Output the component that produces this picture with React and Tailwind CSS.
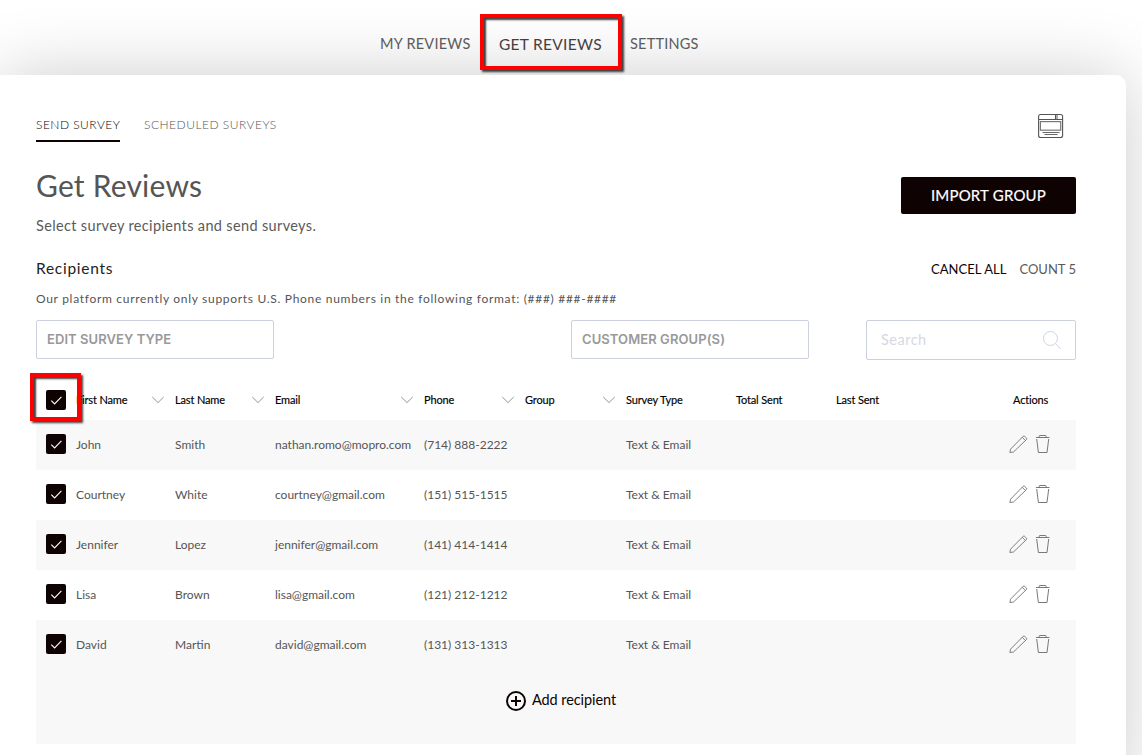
const recipients = [
  ["John", "Smith", "nathan.romo@mopro.com", "(714) 888-2222"],
  ["Courtney", "White", "courtney@gmail.com", "(151) 515-1515"],
  ["Jennifer", "Lopez", "jennifer@gmail.com", "(141) 414-1414"],
  ["Lisa", "Brown", "lisa@gmail.com", "(121) 212-1212"],
  ["David", "Martin", "david@gmail.com", "(131) 313-1313"],
];

const gridCols = "grid grid-cols-[40px_99px_100px_149px_101px_101px_110px_100px_177px_63px]";

function Checkbox() {
  return (
    <span className="ml-[10px] flex h-5 w-5 items-center justify-center rounded-[2px] bg-[#0e0202]">
      <svg width="20" height="20" viewBox="0 0 20 20" fill="none" stroke="white" strokeWidth="1.1">
        <path d="M5.3 10.6 8.6 14 15.4 6.8" />
      </svg>
    </span>
  );
}

function Chevron() {
  return (
    <svg width="14" height="8" viewBox="0 0 14 8" fill="none" stroke="#777" strokeWidth="0.8">
      <path d="M1.3 1 7 6.6 12.7 1" />
    </svg>
  );
}

function Header({ children, sort }) {
  return (
    <div className="flex items-center justify-between pr-[10px]">
      <span className="whitespace-nowrap">{children}</span>
      {sort && <Chevron />}
    </div>
  );
}

function Pencil() {
  return (
    <svg width="20" height="20" viewBox="0 0 20 20" fill="none" stroke="#6a6a6a" strokeWidth="0.85" strokeLinejoin="round">
      <path d="M1.9 18.5 2.5 15.2 15.2 2.3Q15.9 1.6 16.6 2.3L18.5 4.2Q19.1 4.9 18.4 5.6L5.5 18Z M14.2 3.3 17.4 6.5" />
    </svg>
  );
}

function Trash() {
  return (
    <svg width="16" height="20" viewBox="0 0 16 20" fill="none" stroke="#6a6a6a" strokeWidth="0.9">
      <path d="M0.9 3.5H14.5M4.2 3.5V2.3Q4.2 1.5 5 1.5H10.4Q11.2 1.5 11.2 2.3V3.5M1.7 5 3.4 18.5H12L13.7 5" />
    </svg>
  );
}

function WindowIcon() {
  return (
    <svg width="26" height="26" viewBox="0 0 26 26" fill="none" stroke="#555">
      <rect x="0.6" y="1.5" width="24" height="23" rx="2" strokeWidth="1.1" />
      <path d="M1 6.5H24.5M17.5 1.5V6.5M19 1.5V6.5" />
      <rect x="2.4" y="8.6" width="20.3" height="8.6" strokeWidth="1.2" stroke="#777" />
      <path d="M4.5 19.5H21.5M6.5 21.5H19.5" strokeWidth="0.9" />
    </svg>
  );
}

export default function App() {
  return (
    <div className="flex h-[755px] w-[1142px] flex-col overflow-hidden bg-white font-['Lato',sans-serif] text-[#555]">
      <nav className="relative flex h-[75px] shrink-0 items-start pl-[380px] pt-[33px] text-[14.5px] leading-[22px] text-[#606060]">
        <a className="w-[119px] whitespace-nowrap tracking-[0.25px]">MY REVIEWS</a>
        <a className="z-10 w-[131px] whitespace-nowrap text-[15.5px] leading-[22px] tracking-[0.28px] text-[#463e3e]">GET REVIEWS</a>
        <a className="whitespace-nowrap tracking-[0.2px]">SETTINGS</a>
        <div className="absolute left-[480px] top-[14px] z-10 h-[56px] w-[142px] border-4 border-[#f00] shadow-[2px_2px_2px_rgba(0,0,0,0.75),inset_2px_2px_2px_rgba(0,0,0,0.75)]" />
      </nav>

      <main className="relative h-[720px] w-[1126px] shrink-0 rounded-tr-[10px] bg-white pl-9 shadow-[0_0_70px_rgba(0,0,0,0.2)]">
        <div className="w-[1040px]">
          <div className="flex h-[93px] items-start justify-between pt-[38px]">
            <div className="flex gap-6 text-[12px] font-light leading-6">
              <a className="h-[29px] w-[84px] whitespace-nowrap border-b-2 border-[#0e0202] tracking-[0.48px] text-[#0e0202]">SEND SURVEY</a>
              <a className="whitespace-nowrap tracking-[0.5px]">SCHEDULED SURVEYS</a>
            </div>
            <span className="mr-3"><WindowIcon /></span>
          </div>

          <div className="flex h-[84px] items-start justify-between">
            <div>
              <h1 className="-mt-px text-[30px] leading-9 tracking-[0.2px]">Get Reviews</h1>
              <p className="mt-[13px] text-[14.5px] leading-5 tracking-[0.35px] text-[#5a5a5a]">Select survey recipients and send surveys.</p>
            </div>
            <button className="mt-[9px] h-[37px] w-[175px] rounded-[2px] bg-[#0e0202] text-[15px] tracking-[0.2px] text-white [-webkit-text-stroke:0.2px_#fff]">IMPORT GROUP</button>
          </div>

          <div className="mt-[6px] flex h-6 items-center justify-between">
            <h2 className="-mt-[3px] text-[15.5px] tracking-[0.72px] text-[#222]">Recipients</h2>
            <div className="flex gap-[13px] text-[13px]">
              <a className="tracking-[0.05px] text-[#0e0202]">CANCEL ALL</a>
              <span className="text-[#5a5a5a]">COUNT 5</span>
            </div>
          </div>
          <p className="mt-[7px] text-[12px] leading-5 tracking-[0.7px]">
            Our platform currently only supports U.S. Phone numbers in the following format: (###) ###-####
          </p>

          <div className="mt-[11px] flex h-10 items-start text-[#999]">
            <div className="flex h-[39px] w-[238px] items-center rounded-[2px] border border-[#cdd0df] pl-[10px] font-['Inter',sans-serif] text-[13px] font-semibold tracking-[0.07px]">EDIT SURVEY TYPE</div>
            <div className="ml-[297px] flex h-[39px] w-[238px] items-center rounded-[2px] border border-[#cdd0df] pl-[10px] font-['Inter',sans-serif] text-[13px] font-semibold tracking-[0.08px]">CUSTOMER GROUP(S)</div>
            <div className="ml-[57px] flex h-10 w-[210px] items-center justify-between rounded-[2px] border border-[#cdd0df] pl-[14px] pr-[14px] text-[14.5px] tracking-[0.5px] text-[#d6d8e3]">
              <span>Search</span>
              <svg width="19" height="20" viewBox="0 0 19 20" fill="none" stroke="#d2d4e0" strokeWidth="1">
                <circle cx="8.5" cy="8.5" r="7" />
                <path d="M13.5 13.5 18.7 19" />
              </svg>
            </div>
          </div>

          <div className={`${gridCols} relative mt-5 h-10 items-center text-[11px] tracking-[-0.15px] text-[#000] [-webkit-text-stroke:0.15px_#000]`}>
            <Checkbox />
            <Header sort>First Name</Header>
            <Header sort>Last Name</Header>
            <Header sort>Email</Header>
            <Header sort>Phone</Header>
            <Header sort>Group</Header>
            <Header>Survey Type</Header>
            <Header>Total Sent</Header>
            <Header>Last Sent</Header>
            <Header>Actions</Header>
            <div className="absolute left-[-6px] top-[-7px] h-[48px] w-[51px] border-4 border-[#f00] shadow-[2px_2px_2px_rgba(0,0,0,0.75),inset_2px_2px_2px_rgba(0,0,0,0.75)]" />
          </div>

          <div>
            {recipients.map(([first, last, email, phone]) => (
              <div key={email} className={`${gridCols} h-[50px] items-center text-[12px] odd:bg-[#f8f8f8] even:bg-white`}>
                <div className="-mt-[2px]"><Checkbox /></div>
                <span>{first}</span>
                <span>{last}</span>
                <span>{email}</span>
                <span>{phone}</span>
                <span />
                <span>Text &amp; Email</span>
                <span />
                <span />
                <div className="-ml-[5px] -mt-[2px] flex gap-[7px]"><Pencil /><Trash /></div>
              </div>
            ))}
          </div>

          <div className="flex h-[74px] justify-center bg-[#f8f8f8] pl-[10px] pt-5 text-[14.5px] text-[#0e0202]">
            <div className="flex h-[22px] items-center gap-[6px]">
              <svg width="20" height="20" viewBox="0 0 20 20" fill="none" stroke="#0e0202" strokeWidth="2">
                <circle cx="10" cy="10" r="9" />
                <path d="M5 10H15M10 5V15" />
              </svg>
              <span className="-mt-[3px] tracking-[-0.07px]">Add recipient</span>
            </div>
          </div>
        </div>
      </main>
    </div>
  );
}
